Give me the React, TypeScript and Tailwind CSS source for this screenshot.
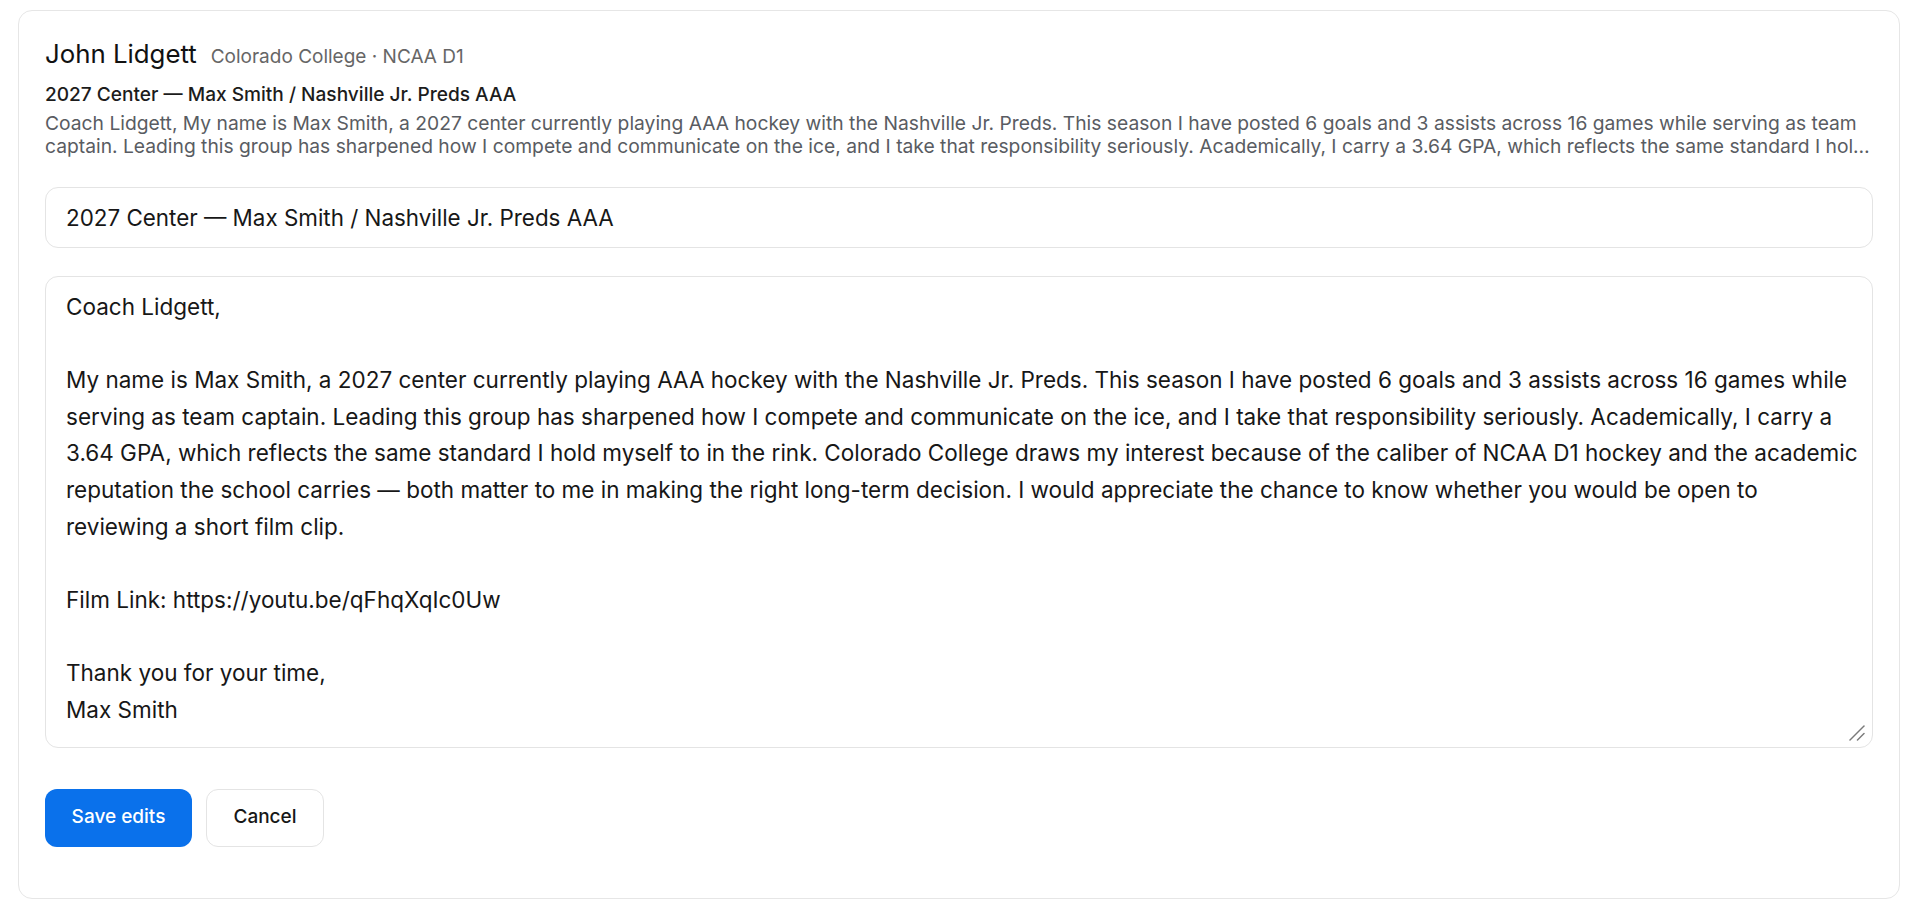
import React, { useState } from "react";

const SUBJECT = "2027 Center — Max Smith / Nashville Jr. Preds AAA";

const PARAGRAPH_LINES = [
  "My name is Max Smith, a 2027 center currently playing AAA hockey with the Nashville Jr. Preds. This season I have posted 6 goals and 3 assists across 16 games while",
  "serving as team captain. Leading this group has sharpened how I compete and communicate on the ice, and I take that responsibility seriously. Academically, I carry a",
  "3.64 GPA, which reflects the same standard I hold myself to in the rink. Colorado College draws my interest because of the caliber of NCAA D1 hockey and the academic",
  "reputation the school carries — both matter to me in making the right long-term decision. I would appreciate the chance to know whether you would be open to",
  "reviewing a short film clip.",
];

const BODY = [
  "Coach Lidgett,",
  "",
  ...PARAGRAPH_LINES,
  "",
  "Film Link: https://youtu.be/qFhqXqIc0Uw",
  "",
  "Thank you for your time,",
  "Max Smith",
].join("\n");

const PREVIEW = `Coach Lidgett, ${PARAGRAPH_LINES.join(" ")} Film Link: https://youtu.be/qFhqXqIc0Uw Thank you for your time, Max Smith`;

function ResizeGrip() {
  return (
    <svg
      width="16"
      height="16"
      viewBox="0 0 16 16"
      className="pointer-events-none absolute right-[8px] bottom-[7px]"
      fill="none"
      stroke="#7a7a7a"
      strokeWidth="1.5"
      strokeLinecap="round"
    >
      <line x1="1" y1="15" x2="15" y2="1" />
      <line x1="8.5" y1="15" x2="15" y2="8.5" />
    </svg>
  );
}

export default function App() {
  const [subject, setSubject] = useState(SUBJECT);
  const [body, setBody] = useState(BODY);

  return (
    <div
      className="min-h-screen bg-white pl-[18px] pr-[20px] pt-[10px] text-[#171717]"
      style={{ fontFamily: "Inter, 'Noto Sans', sans-serif" }}
    >
      <div className="rounded-[14px] border border-[#e6e6e6] bg-white px-[26px] pt-[26px] pb-[51px]">
        {/* coach header */}
        <div className="flex items-baseline gap-[14px]">
          <span className="text-[25.8px] leading-[33px] text-[#111111]">John Lidgett</span>
          <span className="text-[19px] leading-[33px] text-[#666666]">Colorado College · NCAA D1</span>
        </div>

        {/* saved draft summary */}
        <div className="mt-[10px] text-[19.1px] leading-[23.5px] font-[460] text-[#1c1c1c]">{SUBJECT}</div>
        <p className="mt-[5px] line-clamp-2 text-[19.25px] leading-[23.6px] text-[#595c62]">{PREVIEW}</p>

        {/* edit form */}
        <input
          value={subject}
          onChange={(e) => setSubject(e.target.value)}
          className="mt-[28px] block h-[61px] w-full rounded-[13px] border border-[#e4e4e4] bg-white px-[20px] text-[22.4px] text-[#171717] outline-none"
        />
        <div className="relative mt-[28px]">
          <textarea
            value={body}
            onChange={(e) => setBody(e.target.value)}
            className="block h-[472px] w-full resize-none rounded-[13px] border border-[#e4e4e4] bg-white pl-[20px] pr-[8px] py-[12px] text-[22.5px] leading-[36.67px] text-[#171717] outline-none"
          />
          <ResizeGrip />
        </div>

        <div className="mt-[41px] flex gap-[14px]">
          <button className="flex h-[58px] w-[147px] items-center justify-center rounded-[12px] bg-[#0a71eb] text-[19px] font-[470] text-white">
            Save edits
          </button>
          <button className="flex h-[58px] w-[118px] items-center justify-center rounded-[12px] border border-[#e4e4e4] bg-white text-[19px] font-[470] text-[#171717]">
            Cancel
          </button>
        </div>
      </div>
    </div>
  );
}
